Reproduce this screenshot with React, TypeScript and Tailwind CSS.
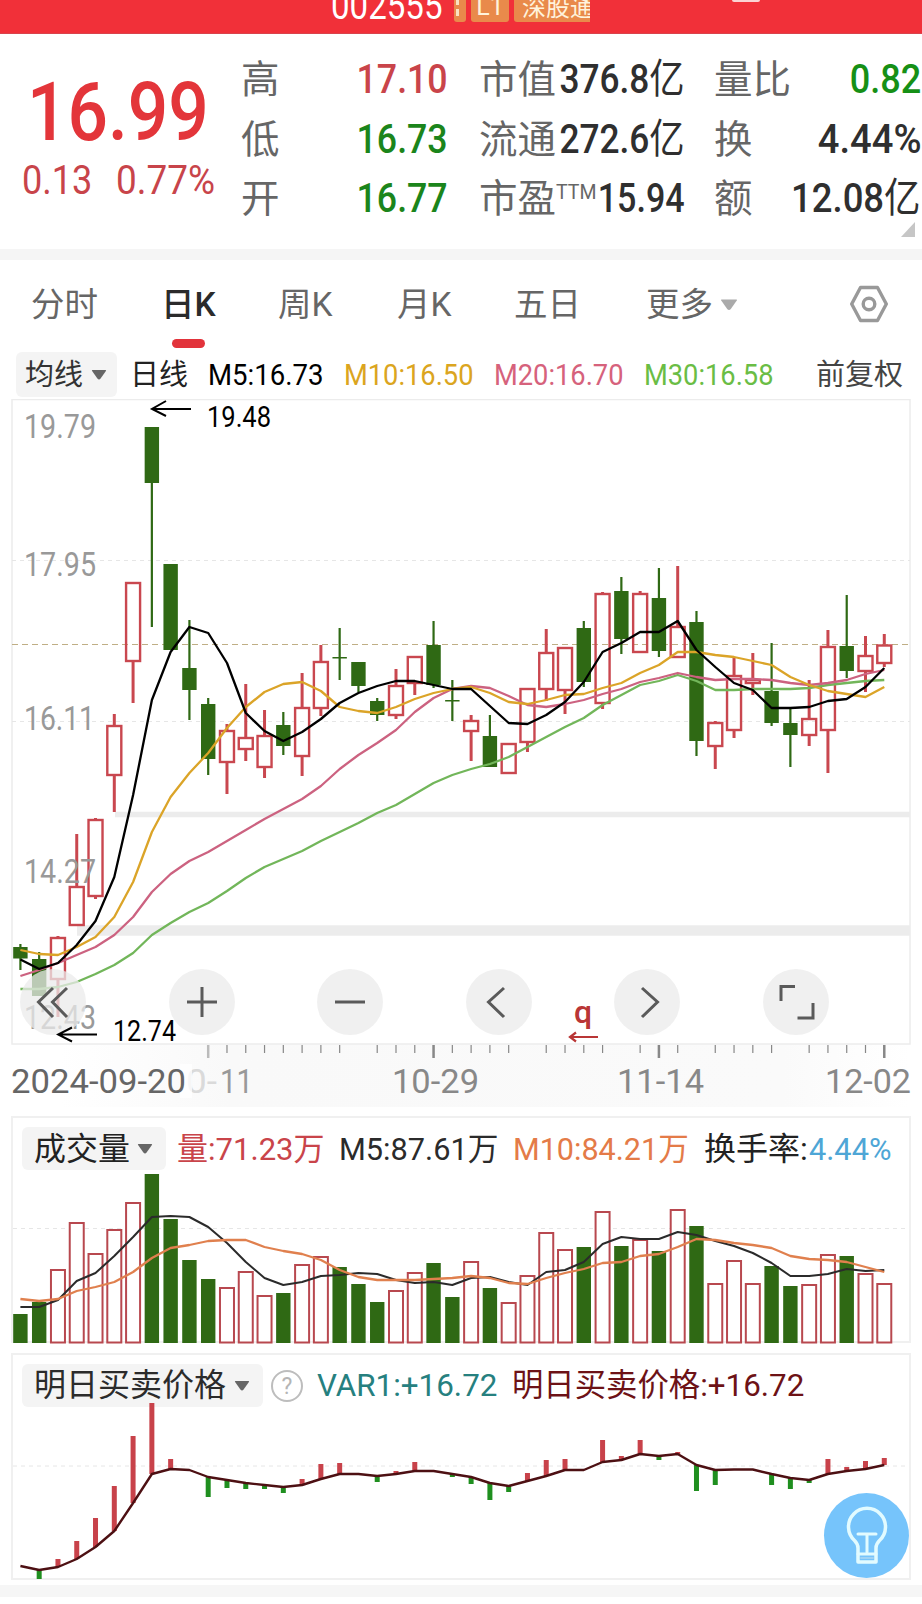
import type { ReactNode } from 'react';

const STEP = 18.78;
const FIRST_X = 20.4;
const UP = '#c9474f';
const DOWN = '#2f6914';

const xAt = (i: number) => FIRST_X + i * STEP;

// [up, high, bodyTop, bodyBottom, low]
const candles: [number, number, number, number, number][] = [
  [0, 944, 947, 958.5, 970], [0, 952, 959, 996, 996], [1, 936, 937, 980, 1017],
  [1, 834, 886, 926, 926], [1, 818, 819, 897, 899], [1, 714, 725, 776, 812],
  [1, 582, 582, 662, 703], [0, 427, 427, 483, 627], [0, 564, 564, 650, 650],
  [0, 620, 668, 690, 720], [0, 698, 704, 759, 775], [1, 724, 730, 763, 794],
  [1, 684, 737, 750, 761], [1, 710, 735, 768, 778], [0, 712, 725, 746, 755],
  [1, 673, 707, 757, 776], [1, 645, 661, 709, 716], [0, 628, 657, 658.5, 680],
  [0, 662, 662, 686, 692], [0, 698, 701, 715, 721], [1, 669, 685, 716, 719],
  [1, 656, 656, 684, 695], [0, 621, 645, 685, 688], [0, 680, 700, 701.5, 721],
  [1, 715, 720, 732, 761], [0, 715, 736, 767, 767], [1, 743, 743, 774, 774],
  [1, 688, 688, 743, 752], [1, 629, 652, 690, 701], [1, 647, 647, 691, 714],
  [0, 621, 628, 682, 687], [1, 592, 593, 704, 709], [0, 577, 591, 639, 654],
  [1, 591, 593, 653, 653], [0, 568, 598, 651, 657], [1, 566, 626, 658, 658],
  [0, 611, 622, 741, 756], [1, 721, 722, 747, 769], [1, 657, 675, 731, 738],
  [1, 653, 679, 684, 695], [0, 643, 691, 723, 726], [0, 707, 723, 735, 767],
  [1, 680, 718, 736, 746], [1, 630, 646, 731, 773], [0, 595, 646, 671, 678],
  [1, 636, 655, 672, 692], [1, 634, 644.5, 664, 667],
];

const ma5 = [
  959.5, 969, 963, 945, 921, 877, 795, 700, 652, 627, 633, 663, 713, 731, 741, 732, 719, 703, 693,
  686, 681, 681, 685, 689, 689, 706, 723, 724, 715, 702, 682, 652, 643, 632, 632, 621, 650, 667,
  683, 690, 708, 708, 707, 701, 699, 687, 668,
];
const ma10 = [
  950, 954, 955, 947, 937, 917, 882, 832, 797, 773, 753, 728, 707, 692, 684, 682, 691, 707, 711,
  713, 707, 699, 693, 689, 687, 693, 702, 704, 700, 695, 694, 688, 683, 673, 665, 652, 652, 655,
  657, 661, 665, 677, 685, 691, 694, 697, 687,
];
const ma20 = [
  976, 970, 963, 955, 947, 935, 917, 892, 874, 861, 852, 841, 830, 819, 809, 799, 786, 769, 755,
  743, 730, 712, 698, 689, 686, 688, 696, 705, 707, 704, 700, 694, 689, 682, 678, 673, 677, 680,
  679, 679, 680, 683, 685, 683, 680, 674, 670,
];
const ma30 = [
  989, 989, 987, 982, 974, 965, 953, 935, 923, 912, 903, 891, 878, 867, 859, 851, 841, 832, 823,
  813, 805, 794, 783, 775, 769, 764, 757, 747, 737, 727, 718, 705, 695, 685, 681, 675, 681, 690,
  690, 689, 689, 689, 688, 685, 683, 681, 680,
];

const volumes = [
  1314, 1302, 1269, 1222, 1253, 1229, 1202, 1174, 1219, 1260, 1279, 1287, 1271, 1295, 1293, 1264,
  1256, 1267, 1284, 1302, 1290, 1272, 1263, 1297, 1261, 1288, 1302, 1275, 1232, 1249, 1247, 1211,
  1246, 1239, 1251, 1209, 1226, 1283, 1260, 1283, 1266, 1286, 1284, 1254, 1256, 1273, 1283,
];
const vol5 = [
  1307, 1307, 1300, 1281, 1273, 1256, 1237, 1217, 1216, 1217, 1227, 1243, 1262, 1278, 1285, 1282,
  1276, 1275, 1273, 1274, 1280, 1283, 1282, 1285, 1278, 1277, 1282, 1285, 1272, 1270, 1262, 1244,
  1237, 1239, 1239, 1232, 1235, 1241, 1246, 1253, 1263, 1276, 1276, 1274, 1269, 1271, 1270,
];
const vol10 = [
  1299, 1301, 1299, 1291, 1287, 1282, 1272, 1258, 1248, 1245, 1241, 1240, 1240, 1247, 1251, 1254,
  1260, 1270, 1277, 1280, 1280, 1280, 1279, 1278, 1276, 1278, 1283, 1284, 1278, 1273, 1269, 1263,
  1262, 1256, 1254, 1247, 1239, 1240, 1243, 1245, 1248, 1256, 1259, 1260, 1262, 1267, 1272,
];

const forecast = [
  1566, 1570, 1567, 1559, 1547, 1531, 1503, 1474, 1469, 1470, 1477, 1480, 1483, 1485, 1487, 1485,
  1479, 1474, 1474, 1476, 1474, 1471, 1471, 1474, 1477, 1483, 1486, 1481, 1476, 1470, 1470, 1462,
  1460, 1454, 1456, 1454, 1465, 1470, 1469.5, 1469.5, 1474, 1478, 1480, 1474, 1471, 1469, 1465,
];
// index -> y of the bar's free end
const forecastBars: [number, number][] = [
  [1, 1579], [2, 1559], [3, 1541], [4, 1518], [5, 1486], [6, 1436], [7, 1403], [8, 1459],
  [10, 1497], [11, 1488], [12, 1489], [13, 1489], [14, 1493], [15, 1479], [16, 1464], [17, 1463],
  [19, 1482], [20, 1471], [21, 1462], [23, 1477], [24, 1484], [25, 1500], [26, 1492], [27, 1473],
  [28, 1460], [29, 1459], [31, 1440], [32, 1456], [33, 1440], [34, 1460], [35, 1452], [36, 1491],
  [37, 1485], [40, 1485], [41, 1489], [42, 1483], [43, 1459], [44, 1467], [45, 1461], [46, 1458],
];

const minorTicks = [
  11, 12, 13, 14, 15, 16, 17, 19, 20, 21, 23, 24, 25, 26, 28, 29, 30, 31, 33, 35, 37, 38, 39, 40,
  42, 43, 44, 45,
];

function Line({ data, color, width = 2.3 }: { data: number[]; color: string; width?: number }) {
  return (
    <polyline
      points={data.map((y, i) => `${xAt(i).toFixed(1)},${y}`).join(' ')}
      fill="none"
      stroke={color}
      strokeWidth={width}
      strokeLinejoin="round"
    />
  );
}

function Label({ x, y, w, size = 33, color = '#999', children }: {
  x: number; y: number; w: number; size?: number; color?: string; children: string;
}) {
  return (
    <text x={x} y={y} fontSize={size} fill={color} textLength={w} lengthAdjust="spacingAndGlyphs">
      {children}
    </text>
  );
}

function Caret({ className }: { className: string }) {
  return (
    <svg viewBox="0 0 16 12" className={className} fill="currentColor">
      <path d="M1.5 1h13q1 0 .4.9L9.6 9.6q-1.6 1.8-3.2 0L1.1 1.9Q.5 1 1.5 1z" />
    </svg>
  );
}

function Num({ className = 'scale-x-[0.88]', children }: { className?: string; children: ReactNode }) {
  return (
    <span className={`inline-block whitespace-nowrap text-[41px] ${className}`}>
      {children}
    </span>
  );
}

function Header() {
  return (
    <header className="flex h-[34px] items-start overflow-hidden border-b border-[#d8434c] bg-[#f13039] pl-[331px] text-white">
      <div className="-mt-[12px] w-[123px] text-[38px] leading-[36px]">
        <span className="inline-block origin-left scale-x-[0.87]">002555</span>
      </div>
      <div className="flex h-[22px] gap-[5px] text-[#fff3dc]">
        <div className="w-3 rounded-b-[3px] bg-[#e98a4b] pl-[2px]">
          <div className="h-[5px] w-[3px] bg-[#fbe3c2]" />
          <div className="mt-1 h-[7px] w-[3px] bg-[#fbe3c2]" />
        </div>
        <div className="w-[38px] rounded-b-[3px] bg-[#e98a4b] text-center text-[25px] leading-[13px]">L1</div>
        <div className="w-[76px] overflow-hidden rounded-bl-[3px] bg-[#e98a4b] pl-2 text-[24px] leading-[17px] whitespace-nowrap">
          深股通
        </div>
      </div>
      <div className="ml-[142px] h-[2px] w-7 rounded-b-full bg-[#fbd3d3]" />
    </header>
  );
}

function Quote() {
  return (
    <section className="flex h-[215px] bg-white">
      <div className="w-[241px] shrink-0 pt-[45px] text-[#e3353a]">
        <div className="h-[70px] pl-[27px] text-[81px] leading-[68px] font-medium">
          <span className="inline-block origin-left scale-x-[0.88]">16.99</span>
        </div>
        <div className="flex pl-[22px] leading-[62px] text-[#c8444a]">
          <div className="w-[94px]"><Num className="origin-left scale-x-[0.88]">0.13</Num></div>
          <div><Num className="origin-left scale-x-[0.9]">0.77%</Num></div>
        </div>
      </div>
      <div className="grid h-[195px] grid-cols-[207px_31px_206px_29px_207px] grid-rows-3 pt-[16px] text-[38.5px] leading-[59.5px] whitespace-nowrap text-[#666]">
        <div className="flex justify-between">高<Num className="origin-right scale-x-[0.87] font-medium text-[#c9444a]">17.10</Num></div>
        <span />
        <div className="flex justify-between"><span className="w-[76px]">市值</span><Num className="-ml-10 origin-right scale-x-[0.86] font-medium text-[#2f2f2f]">376.8<span className="font-normal">亿</span></Num></div>
        <span />
        <div className="flex justify-between">量比<Num className="origin-right scale-x-[0.88] font-medium text-[#169016]">0.82</Num></div>

        <div className="flex justify-between">低<Num className="origin-right scale-x-[0.87] font-medium text-[#1b851b]">16.73</Num></div>
        <span />
        <div className="flex justify-between"><span className="w-[76px]">流通</span><Num className="-ml-10 origin-right scale-x-[0.86] font-medium text-[#2f2f2f]">272.6<span className="font-normal">亿</span></Num></div>
        <span />
        <div className="flex justify-between">换<Num className="origin-right scale-x-[0.93] font-medium text-[#2f2f2f]">4.44%</Num></div>

        <div className="flex justify-between">开<Num className="origin-right scale-x-[0.87] font-medium text-[#1b851b]">16.77</Num></div>
        <span />
        <div className="flex justify-between">
          <span className="flex w-[115px]">
            市盈
            <span className="-translate-y-[6px] text-[19.5px] leading-[59px]">TTM</span>
          </span>
          <Num className="-ml-10 origin-right scale-x-[0.83] font-medium text-[#2f2f2f]">15.94</Num>
        </div>
        <span />
        <div className="flex justify-between">额<Num className="origin-right scale-x-[0.89] font-medium text-[#2f2f2f]">12.08<span className="font-normal">亿</span></Num></div>
      </div>
    </section>
  );
}

function Tabs() {
  return (
    <nav className="grid h-[90px] grid-cols-[130px_117px_119px_117px_132px_204px_1fr] pl-[31px] text-[33.5px] leading-[90px] text-[#666]">
      <span>分时</span>
      <span className="flex flex-col font-medium text-[#2b2b2b]">
        <span className="h-[79px]">日K</span>
        <span className="ml-[11px] h-[9px] w-[33px] rounded-full bg-[#e2333b]" />
      </span>
      <span>周K</span>
      <span>月K</span>
      <span>五日</span>
      <span className="flex items-center">
        更多
        <Caret className="ml-[7px] h-4 w-[18px] text-[#aaa]" />
      </span>
      <svg viewBox="0 0 38 38" className="mt-[25px] h-[38px] w-[38px]" fill="none" stroke="#999" strokeWidth="3.4" strokeLinejoin="round">
        <path d="M10.5 2.500h17L36.300 19l-8.800 16.500h-17L1.700 19z" />
        <circle cx="19" cy="19" r="5.800" />
      </svg>
    </nav>
  );
}

function AverageBar() {
  return (
    <div className="grid h-[49px] grid-cols-[114px_78px_136px_150px_150px_172px_1fr] items-center pl-4 text-[29px] leading-[48px] whitespace-nowrap">
      <div className="flex h-[45px] w-[101px] items-center rounded-md bg-[#f4f4f4] pl-[9px] text-[#333]">
        均线
        <Caret className="ml-2 h-3 w-4 text-[#666]" />
      </div>
      <span className="text-[#222]">日线</span>
      <span className="origin-left scale-x-[0.95] text-black">M5:16.73</span>
      <span className="origin-left scale-x-[0.94] text-[#dba520]">M10:16.50</span>
      <span className="origin-left scale-x-[0.94] text-[#d6627c]">M20:16.70</span>
      <span className="origin-left scale-x-[0.94] text-[#6abd45]">M30:16.58</span>
      <span className="text-[#444]">前复权</span>
    </div>
  );
}

const controls: { x: string; d: string }[] = [
  { x: 'left-[20px]', d: 'M33 19 18.500 33 33 48M47 19 32.500 33 47 48' },
  { x: 'left-[169px]', d: 'M18 33h30M33 18v30' },
  { x: 'left-[317px]', d: 'M18 33h30' },
  { x: 'left-[466px]', d: 'M38 19 22.500 33 38 48' },
  { x: 'left-[614px]', d: 'M28 19 43.500 33 28 48' },
  { x: 'left-[763px]', d: 'M18 32V17.500H32M50 34v15H34.500' },
];

function PriceChart() {
  return (
    <section className="relative h-[717px]">
      <svg viewBox="0 399 922 717" className="block h-[717px] w-full">
        <defs>
          <linearGradient id="axisFade" x1="0" y1="0" x2="1" y2="0">
            <stop offset="0" stopColor="#fff" />
            <stop offset="0.2" stopColor="#f9f9f9" />
            <stop offset="0.85" stopColor="#fafafa" />
            <stop offset="1" stopColor="#fff" />
          </linearGradient>
        </defs>
        <rect x="60" y="1045" width="850" height="62" fill="url(#axisFade)" />
        <rect x="12" y="399.500" width="898" height="644.500" fill="#fff" stroke="#ececec" strokeWidth="1.500" />
        <g stroke="#e6e6e6" strokeDasharray="4 4">
          <path d="M12 560.500H910M12 721.500H910" />
        </g>
        <path d="M115 814.500H910" stroke="#ececec" strokeWidth="5.500" />
        <path d="M77 930.500H910" stroke="#ececec" strokeWidth="10.500" />
        <path d="M12 644.500H910" stroke="#bfae85" strokeDasharray="6 4" />

        {candles.map(([up, high, top, bottom, low], i) => {
          const x = xAt(i);
          return up ? (
            <g key={i} stroke={UP} strokeWidth="2.400" fill="none">
              <path d={`M${x} ${high}V${top}M${x} ${bottom}V${low}`} strokeWidth="3" />
              <rect x={x - 7} y={top + 1} width="14" height={Math.max(bottom - top - 2, 1)} />
            </g>
          ) : (
            <g key={i} fill={DOWN}>
              <rect x={x - 1.1} y={high} width="2.200" height={low - high} />
              <rect x={x - 7.2} y={top} width="14.400" height={bottom - top} />
            </g>
          );
        })}

        <Label x={24} y={438} w={72}>19.79</Label>
        <Label x={24} y={576} w={72}>17.95</Label>
        <Label x={24} y={730} w={71}>16.11</Label>
        <Label x={24} y={883} w={72}>14.27</Label>
        <Label x={24} y={1029} w={72}>12.43</Label>

        <Line data={ma30} color="#72b65a" />
        <Line data={ma20} color="#cc6280" />
        <Line data={ma10} color="#dba428" />
        <Line data={ma5} color="#000" />

        <g fill="none" stroke="#000" strokeWidth="2">
          <path d="M191 409H153M166 401l-14 8 14 7" />
        </g>
        <Label x={207} y={427} w={64} size={29} color="#000">19.48</Label>

        <text x="574" y="1023" fontSize="32" fontWeight="500" fill="#b93636">q</text>
        <path d="M598 1037H571M576 1032.500l-6 4.500 6 4.500" fill="none" stroke="#b93636" strokeWidth="2.200" />

        <g stroke="#888" strokeWidth="1.200">
          {minorTicks.map((i) => (
            <path key={i} d={`M${xAt(i)} 1045v8`} />
          ))}
          <path d={`M${xAt(10)} 1045v13`} stroke="#bbb" strokeWidth="2.500" />
          <path d={`M${xAt(22)} 1045v13M${xAt(34)} 1045v13M${xAt(46)} 1045v13`} strokeWidth="2.500" />
        </g>
        {/* second date label is partly faded by the start date */}
        <Label x={186} y={1093} w={31} color="#dadada">0-</Label>
        <rect x="180" y="1064" width="12" height="34" fill="#fff" opacity="0.75" />
        <Label x={11} y={1093} w={175} color="#666">2024-09-20</Label>
        <Label x={220} y={1093} w={33} color="#999">11</Label>
        <Label x={392} y={1093} w={87} color="#888">10-29</Label>
        <Label x={617} y={1093} w={87} color="#888">11-14</Label>
        <Label x={825} y={1093} w={86} color="#888">12-02</Label>
      </svg>
      {controls.map(({ x, d }) => (
        <button key={x} className={`absolute top-[570px] h-[66px] w-[66px] rounded-full bg-[#ebebeb]/75 ${x}`}>
          <svg viewBox="0 0 66 66" fill="none" stroke="#5a5a5a" strokeWidth="3">
            <path d={d} />
          </svg>
        </button>
      ))}
      {/* low mark stays above the round buttons */}
      <svg viewBox="0 0 130 32" className="pointer-events-none absolute top-[615px] left-[56px] h-8 w-[130px]">
        <path d="M41 20.500H3M16 13.500 2 20.500l14 7" fill="none" stroke="#000" strokeWidth="2" />
        <Label x={57} y={27} w={63} size={29} color="#000">12.74</Label>
      </svg>
    </section>
  );
}

function VolumePanel() {
  return (
    <section className="relative ml-[11px] h-[227px] w-[900px] border-2 border-[#f0f0f0] text-[32px] leading-[44px]">
      <svg viewBox="13 1118 896 225" className="absolute inset-0 h-[225px] w-[896px] overflow-visible">
        <path d="M13 1228.500H909" stroke="#e6e6e6" strokeDasharray="4 4" />
        {volumes.map((y, i) =>
          candles[i][0] ? (
            <rect key={i} x={xAt(i) - 7} y={y + 1} width="14" height={1341.5 - y} fill="#fff" stroke="#b8484f" strokeWidth="2" />
          ) : (
            <rect key={i} x={xAt(i) - 7.2} y={y} width="14.400" height={1343 - y} fill={DOWN} />
          ),
        )}
        <Line data={vol5} color="#2b2b2b" width={2} />
        <Line data={vol10} color="#e0804e" />
      </svg>
      <div className="relative grid grid-cols-[155px_162px_174px_191px_105px_1fr] pt-[9px] pl-[9px] whitespace-nowrap">
        <div className="flex h-[43px] w-[144px] items-center rounded-md bg-[#f4f4f4] pl-3 text-[#222]">
          成交量
          <Caret className="ml-[7px] h-3 w-4 text-[#666]" />
        </div>
        <span className="origin-left scale-x-[0.97] text-[#c9444a]">量:71.23万</span>
        <span className="origin-left scale-x-[0.96] text-[#2b2b2b]">M5:87.61万</span>
        <span className="origin-left scale-x-[0.955] text-[#e47b48]">M10:84.21万</span>
        <span className="text-[#222]">换手率:</span>
        <span className="origin-left scale-x-[0.96] text-[#4ea6d6]">4.44%</span>
      </div>
    </section>
  );
}

function ForecastPanel() {
  return (
    <section className="relative mt-[10px] ml-[11px] h-[227px] w-[900px] border-2 border-[#f0f0f0] text-[32px] leading-[43px]">
      <div className="grid grid-cols-[249px_46px_195px_1fr] pt-[9px] pl-[9px] whitespace-nowrap">
        <div className="flex h-[43px] w-[241px] items-center rounded-md bg-[#f4f4f4] pl-3 text-[#2b2b2b]">
          明日买卖价格
          <Caret className="ml-[8px] h-3 w-4 text-[#666]" />
        </div>
        <svg viewBox="0 0 32 32" className="mt-[6px] h-8 w-8">
          <circle cx="16" cy="16" r="15" fill="none" stroke="#bdbdbd" strokeWidth="2" />
          <text x="16" y="24" fontSize="23" textAnchor="middle" fill="#b5b5b5">?</text>
        </svg>
        <span className="origin-left scale-x-[0.98] text-[#26807f]">VAR1:+16.72</span>
        <span className="origin-left scale-x-[0.98] text-[#6d1216]">明日买卖价格:+16.72</span>
      </div>
      <svg viewBox="13 1355 896 223" className="absolute inset-0 h-[223px] w-[896px] overflow-visible">
        <path d="M13 1466H909" stroke="#e6e6e6" strokeDasharray="4 4" />
        {forecastBars.map(([i, tip]) => {
          const base = forecast[i];
          return (
            <rect
              key={i}
              x={xAt(i) - 2.5}
              y={Math.min(base, tip)}
              width="5"
              height={Math.abs(base - tip)}
              fill={tip < base ? '#c8424a' : '#1f8f1f'}
            />
          );
        })}
        <Line data={forecast} color="#4d1013" width={2.4} />
      </svg>
      <button className="absolute top-[138px] left-[811px] h-[85px] w-[85px] rounded-full bg-[#76c4fb]">
        <svg viewBox="0 0 85 85" fill="none" stroke="#e2fbff" strokeWidth="3.500" strokeLinejoin="round" strokeLinecap="round">
          <path d="M34 60v-5c0-3-1-5-3.500-7.500a18.500 18.500 0 1 1 25 0C53 50 52 52 52 55v14H34z" />
          <path d="M34 61h18M43 59V42M34 41h18" strokeWidth="3" />
          <path d="M37 65h12" stroke="#9fd3f5" strokeWidth="2" />
        </svg>
      </button>
    </section>
  );
}

export default function App() {
  return (
    <main className="h-[1604px] w-[922px] overflow-hidden bg-white font-['Roboto','Noto_Sans_CJK_SC',sans-serif]">
      <Header />
      <div className="relative">
        <Quote />
        <svg viewBox="0 0 14 15" className="absolute right-[7px] bottom-3 h-[15px] w-[14px]">
          <path d="M14 0v15H0z" fill="#c6c6c6" />
        </svg>
      </div>
      <div className="h-[11px] bg-[#f5f5f5]" />
      <Tabs />
      <AverageBar />
      <PriceChart />
      <VolumePanel />
      <ForecastPanel />
      <div className="mt-[5px] h-3 bg-[#f6f6f6]" />
    </main>
  );
}
